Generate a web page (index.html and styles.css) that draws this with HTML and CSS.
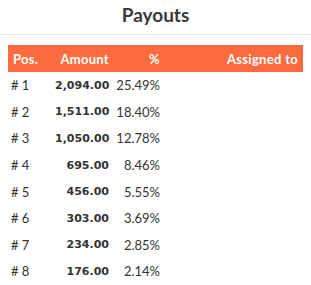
FILE: index.html
```html
<!DOCTYPE html>
<html>
<head>
<meta charset="utf-8">
<link rel="stylesheet" href="styles.css">
</head>
<body>
<div class="panel">
  <h3 class="title">Payouts</h3>
  <div class="content">
    <table class="payouts">
      <colgroup>
        <col class="w-pos"><col class="w-amt"><col class="w-pct"><col>
      </colgroup>
      <thead>
        <tr>
          <th class="c-pos">Pos.</th>
          <th class="c-amt">Amount</th>
          <th class="c-pct">%</th>
          <th class="c-asg">Assigned to</th>
        </tr>
      </thead>
      <tbody>
        <tr><td class="c-pos"># 1</td><td class="c-amt">2,094.00</td><td class="c-pct">25.49%</td><td></td></tr>
        <tr><td class="c-pos"># 2</td><td class="c-amt">1,511.00</td><td class="c-pct">18.40%</td><td></td></tr>
        <tr><td class="c-pos"># 3</td><td class="c-amt">1,050.00</td><td class="c-pct">12.78%</td><td></td></tr>
        <tr><td class="c-pos"># 4</td><td class="c-amt">695.00</td><td class="c-pct">8.46%</td><td></td></tr>
        <tr><td class="c-pos"># 5</td><td class="c-amt">456.00</td><td class="c-pct">5.55%</td><td></td></tr>
        <tr><td class="c-pos"># 6</td><td class="c-amt">303.00</td><td class="c-pct">3.69%</td><td></td></tr>
        <tr><td class="c-pos"># 7</td><td class="c-amt">234.00</td><td class="c-pct">2.85%</td><td></td></tr>
        <tr><td class="c-pos"># 8</td><td class="c-amt">176.00</td><td class="c-pct">2.14%</td><td></td></tr>
      </tbody>
    </table>
  </div>
</div>
</body>
</html>
```
FILE: styles.css
```css
html, body {
  margin: 0;
  padding: 0;
  background: #fff;
}
body {
  font-family: Lato, "Open Sans", sans-serif;
  color: #333;
  font-size: 13px;
}
.title {
  margin: 0;
  height: 34px;
  line-height: 30px;
  text-align: center;
  font-size: 19px;
  font-weight: 700;
  color: #3a3a3a;
  border-bottom: 1px solid #e5e5e5;
}
.content {
  padding: 10px 8px 0;
}
.payouts {
  width: 100%;
  table-layout: fixed;
  border-collapse: collapse;
  border-spacing: 0;
}
.w-pos { width: 47px; }
.w-amt { width: 59px; }
.w-pct { width: 51px; }
.payouts th {
  background: #ff6b3f;
  color: #fff;
  font-weight: 700;
  height: 27px;
  padding: 0 5px;
  box-sizing: border-box;
  letter-spacing: 0.3px;
  white-space: nowrap;
}
.payouts td {
  height: 26.6px;
  padding: 0 5px;
  box-sizing: border-box;
  white-space: nowrap;
}
.c-pos { text-align: left; }
td.c-pos { padding-left: 3px; }
.c-amt { text-align: right; }
td.c-amt {
  font-family: "DejaVu Sans", sans-serif;
  font-weight: 700;
  font-size: 11px;
  padding-left: 0;
}
.c-pct { text-align: right; }
td.c-pct { padding-left: 0; }
.c-asg { text-align: right; padding-right: 6px; }
```
